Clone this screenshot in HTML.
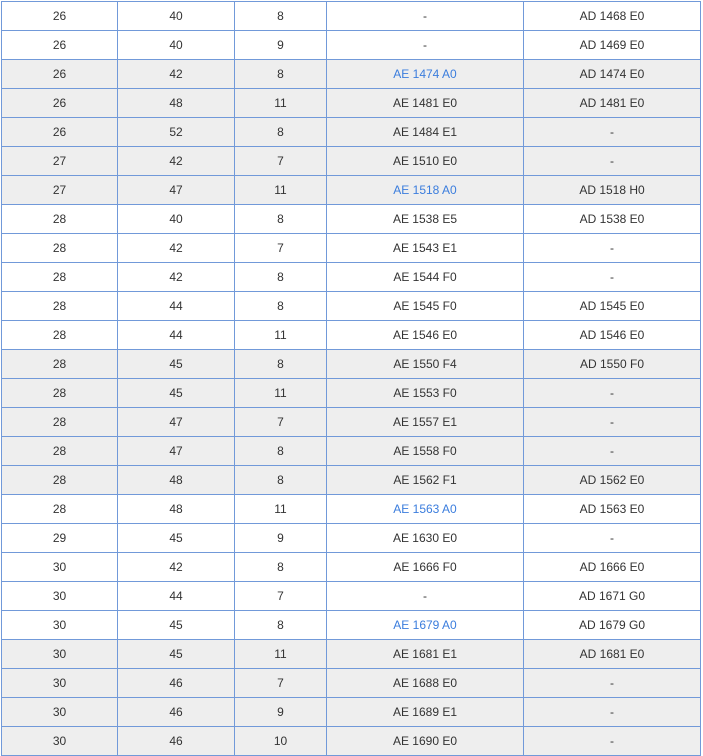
<!DOCTYPE html><html><head><style>
body{margin:0;background:#fff;width:703px;height:754px;overflow:hidden;font-family:"Liberation Sans",Arial,sans-serif;font-size:12px;color:#333}
#t{position:absolute;left:1px;top:1px;border-top:1px solid #7199d9;border-left:1px solid #7199d9}
.r{display:flex;height:29px}
.r.g{background:#eeeeee}
.r div{box-sizing:border-box;height:29px;border-right:1px solid #7199d9;border-bottom:1px solid #7199d9;text-align:center;line-height:28px}
.r div:nth-child(1){width:116px}.r div:nth-child(2){width:117px}.r div:nth-child(3){width:92px}.r div:nth-child(4){width:197px}.r div:nth-child(5){width:177px}
a{color:#3b7ddd;text-decoration:none}
</style></head><body><div id="t">
<div class="r"><div>26</div><div>40</div><div>8</div><div>-</div><div>AD 1468 E0</div></div>
<div class="r"><div>26</div><div>40</div><div>9</div><div>-</div><div>AD 1469 E0</div></div>
<div class="r g"><div>26</div><div>42</div><div>8</div><div><a>AE 1474 A0</a></div><div>AD 1474 E0</div></div>
<div class="r g"><div>26</div><div>48</div><div>11</div><div>AE 1481 E0</div><div>AD 1481 E0</div></div>
<div class="r g"><div>26</div><div>52</div><div>8</div><div>AE 1484 E1</div><div>-</div></div>
<div class="r g"><div>27</div><div>42</div><div>7</div><div>AE 1510 E0</div><div>-</div></div>
<div class="r g"><div>27</div><div>47</div><div>11</div><div><a>AE 1518 A0</a></div><div>AD 1518 H0</div></div>
<div class="r"><div>28</div><div>40</div><div>8</div><div>AE 1538 E5</div><div>AD 1538 E0</div></div>
<div class="r"><div>28</div><div>42</div><div>7</div><div>AE 1543 E1</div><div>-</div></div>
<div class="r"><div>28</div><div>42</div><div>8</div><div>AE 1544 F0</div><div>-</div></div>
<div class="r"><div>28</div><div>44</div><div>8</div><div>AE 1545 F0</div><div>AD 1545 E0</div></div>
<div class="r"><div>28</div><div>44</div><div>11</div><div>AE 1546 E0</div><div>AD 1546 E0</div></div>
<div class="r g"><div>28</div><div>45</div><div>8</div><div>AE 1550 F4</div><div>AD 1550 F0</div></div>
<div class="r g"><div>28</div><div>45</div><div>11</div><div>AE 1553 F0</div><div>-</div></div>
<div class="r g"><div>28</div><div>47</div><div>7</div><div>AE 1557 E1</div><div>-</div></div>
<div class="r g"><div>28</div><div>47</div><div>8</div><div>AE 1558 F0</div><div>-</div></div>
<div class="r g"><div>28</div><div>48</div><div>8</div><div>AE 1562 F1</div><div>AD 1562 E0</div></div>
<div class="r"><div>28</div><div>48</div><div>11</div><div><a>AE 1563 A0</a></div><div>AD 1563 E0</div></div>
<div class="r"><div>29</div><div>45</div><div>9</div><div>AE 1630 E0</div><div>-</div></div>
<div class="r"><div>30</div><div>42</div><div>8</div><div>AE 1666 F0</div><div>AD 1666 E0</div></div>
<div class="r"><div>30</div><div>44</div><div>7</div><div>-</div><div>AD 1671 G0</div></div>
<div class="r"><div>30</div><div>45</div><div>8</div><div><a>AE 1679 A0</a></div><div>AD 1679 G0</div></div>
<div class="r g"><div>30</div><div>45</div><div>11</div><div>AE 1681 E1</div><div>AD 1681 E0</div></div>
<div class="r g"><div>30</div><div>46</div><div>7</div><div>AE 1688 E0</div><div>-</div></div>
<div class="r g"><div>30</div><div>46</div><div>9</div><div>AE 1689 E1</div><div>-</div></div>
<div class="r g"><div>30</div><div>46</div><div>10</div><div>AE 1690 E0</div><div>-</div></div>
</div></body></html>
